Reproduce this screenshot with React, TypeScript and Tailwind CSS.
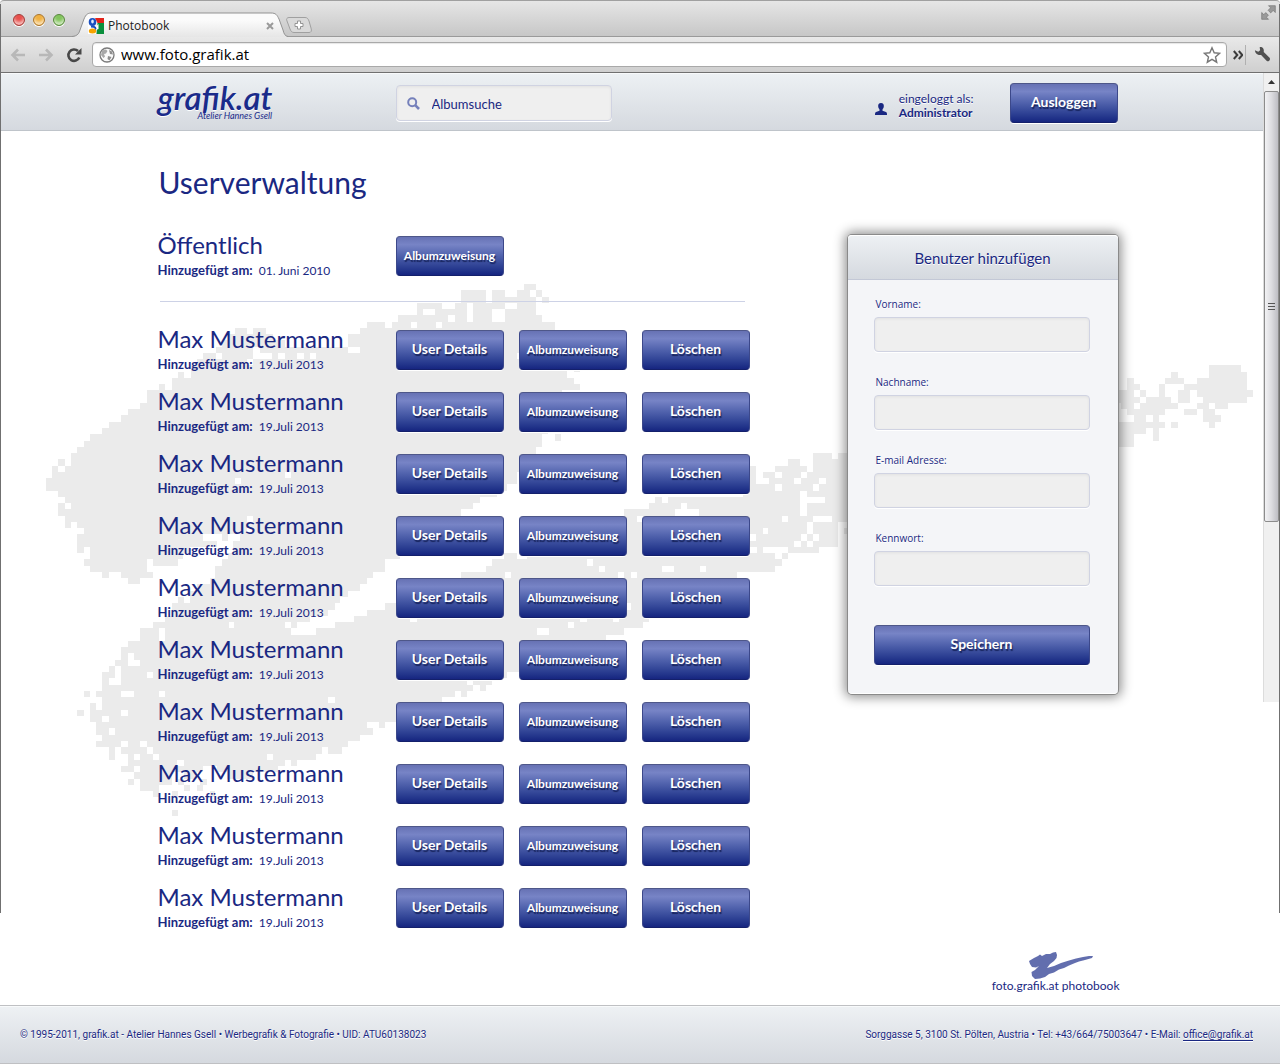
import type { ReactNode } from "react";

// Brush-stroke artwork: one entry per pixel row, [start, end] runs on a 3x grid.
const STROKE_ROWS: number[][][] = [
  [[1572, 1608]],
  [[1382, 1457], [1477, 1514], [1552, 1590], [1608, 1627]],
  [[1382, 1457], [1477, 1609], [1627, 1646]],
  [[1250, 1325], [1364, 1402], [1420, 1514], [1552, 1608]],
  [[1250, 1268], [1306, 1402], [1420, 1477], [1514, 1608]],
  [[1195, 1345], [1364, 1402], [1420, 1477], [1514, 1627]],
  [[1100, 1155], [1175, 1232], [1250, 1307], [1325, 1665]],
  [[704, 740], [760, 797], [1081, 1665]],
  [[685, 818], [1043, 1665]],
  [[667, 855], [1043, 1665]],
  [[648, 760], [780, 1044], [1081, 1665]],
  [[610, 648], [667, 760], [816, 835], [855, 890], [912, 930], [949, 1552], [1558, 1665]],
  [[590, 740], [760, 1665]],
  [[572, 1702], [1722, 1740], [3627, 3722]],
  [[534, 552], [572, 1702], [3514, 3533], [3627, 3740]],
  [[515, 1722], [3382, 3402], [3495, 3551], [3590, 3740]],
  [[477, 495], [515, 1740], [3382, 3420], [3477, 3495], [3551, 3740]],
  [[440, 1685], [3340, 3402], [3420, 3438], [3477, 3495], [3533, 3570], [3590, 3759]],
  [[440, 1685], [3340, 3420], [3438, 3514], [3533, 3570], [3608, 3740]],
  [[420, 1680], [3363, 3402], [3420, 3533], [3590, 3627], [3645, 3684]],
  [[383, 1670], [3382, 3495], [3553, 3590], [3608, 3645]],
  [[364, 1660], [3402, 3438], [3458, 3477], [3608, 3664]],
  [[326, 1650], [3340, 3495], [3514, 3533], [3627, 3645]],
  [[307, 1645], [3340, 3438], [3458, 3477]],
  [[270, 1627], [1665, 1684], [3340, 3402], [3458, 3477]],
  [[251, 1627], [3340, 3402]],
  [[232, 1609]],
  [[213, 1609], [2439, 2495], [2514, 2620]],
  [[175, 194], [213, 1590], [2363, 2400], [2439, 2620]],
  [[157, 175], [194, 1570], [2250, 2268], [2325, 2420], [2439, 2620]],
  [[157, 855], [872, 1552], [2250, 2268], [2288, 2325], [2345, 2402], [2420, 2620]],
  [[138, 704], [722, 1552], [2250, 2268], [2308, 2383], [2402, 2458], [2477, 2620]],
  [[138, 1520], [2250, 2325], [2345, 2439], [2458, 2620]],
  [[175, 1490], [2230, 2400], [2420, 2620]],
  [[194, 1440], [1965, 1985], [2003, 2400], [2475, 2620]],
  [[175, 194], [213, 1420], [1948, 2043], [2062, 2400], [2420, 2620]],
  [[175, 1382], [1872, 2025], [2098, 2400], [2420, 2620]],
  [[194, 740], [760, 1370], [1860, 1910], [1930, 2345], [2363, 2439], [2495, 2620]],
  [[194, 213], [232, 1350], [1850, 2420], [2439, 2514], [2552, 2620]],
  [[251, 740], [760, 1330], [1800, 2290], [2305, 2420], [2439, 2514], [2533, 2620]],
  [[232, 610], [667, 685], [720, 1300], [1740, 2250], [2268, 2402], [2420, 2439], [2458, 2514]],
  [[232, 650], [700, 1270], [1680, 2382], [2402, 2420], [2439, 2514]],
  [[232, 251], [270, 570], [700, 1240], [1600, 2250], [2270, 2290], [2363, 2457]],
  [[270, 550], [685, 1200], [1512, 1552], [1580, 2325], [2345, 2363]],
  [[251, 440], [458, 535], [667, 1156], [1477, 1761], [1780, 2345]],
  [[270, 440], [645, 1156], [1458, 1798], [1816, 1987], [2023, 2100], [2117, 2325]],
  [[307, 326], [364, 458], [645, 1118], [1382, 1515], [1534, 1855], [1873, 1892], [1911, 2212]],
  [[383, 420], [630, 1100], [1340, 2200]],
  [[590, 1081], [1290, 2170]],
  [[570, 1044], [1240, 2130]],
  [[534, 552], [570, 1020], [1200, 2080]],
  [[515, 1006], [1156, 1881], [1892, 2030]],
  [[515, 985], [1100, 1990]],
  [[495, 930], [1063, 1230], [1250, 1740], [1760, 1840], [1856, 1948]],
  [[458, 687], [702, 855], [872, 890], [1006, 1704], [1722, 1928]],
  [[420, 477], [495, 872], [949, 1610], [1647, 1872]],
  [[420, 477], [495, 1817]],
  [[383, 1780]],
  [[364, 1700]],
  [[364, 383], [402, 1640]],
  [[345, 383], [420, 1557]],
  [[326, 345], [364, 1557]],
  [[307, 345], [364, 440], [458, 1520]],
  [[307, 326], [364, 1402], [1420, 1475]],
  [[307, 1420], [1440, 1458]],
  [[251, 270], [288, 364], [402, 477], [495, 1364], [1383, 1401]],
  [[307, 985], [1005, 1325]],
  [[270, 288], [307, 1300]],
  [[232, 251], [270, 364], [383, 1270]],
  [[270, 307], [326, 1210]],
  [[288, 1100], [1137, 1156]],
  [[288, 326], [345, 1118]],
  [[307, 1081]],
  [[288, 364], [383, 420], [440, 1044]],
  [[326, 345], [364, 440], [458, 965], [985, 1025]],
  [[326, 345], [383, 402], [420, 458], [477, 800], [818, 949]],
  [[383, 530], [552, 855], [872, 890]],
  [[364, 402], [420, 610], [650, 835]],
  [[402, 515], [552, 590], [680, 760]],
  [[383, 402], [420, 515], [535, 552], [600, 620]],
  [[420, 477], [552, 570], [590, 610]],
  [[458, 477], [515, 535], [630, 645]],
  [],
  [],
  [[515, 534]],
];

const rowTop = (r: number) => Math.round(42 + r * 18.78);
const STROKE_PATH = STROKE_ROWS.map((runs, r) =>
  runs.map(([a, b]) => `M${a} ${rowTop(r)}H${b}V${rowTop(r + 1)}H${a}Z`).join(""),
).join("");

function BrushBackdrop() {
  return (
    <svg
      aria-hidden="true"
      className="pointer-events-none absolute left-0 top-[139px] h-[560px] w-[1260px]"
      viewBox="0 0 3780 1680"
      shapeRendering="crispEdges"
    >
      <path d={STROKE_PATH} fill="#ebebeb" />
    </svg>
  );
}

function NavyButton({ children, className = "" }: { children: ReactNode; className?: string }) {
  return (
    <button
      type="button"
      className={`h-10 cursor-pointer rounded border border-t-[#4e5789] border-x-[#3c488a] border-b-[#14206b] bg-linear-to-b from-[#6772b4] via-[#7784c6] via-20% to-[#162580] text-center font-bold text-white shadow-[0_1px_0_#fff] [text-shadow:1px_2px_1px_rgba(10,20,70,0.75)] ${className}`}
    >
      {children}
    </button>
  );
}

function TrafficLight({ className }: { className: string }) {
  return (
    <span className={`h-3 w-3 rounded-full border shadow-[0_1px_0_#fff,inset_0_-3px_3px_rgba(255,255,255,0.6)] ${className}`} />
  );
}

function BrowserChrome() {
  return (
    <div className="font-['Open_Sans',sans-serif]">
      <div className="relative flex h-[37px] items-start rounded-t border-t border-[#a0a0a0] bg-linear-to-b from-[#e6e6e6] to-[#c6c6c6] shadow-[inset_0_-1px_0_#9a9a9a]">
        <div className="flex gap-2 pl-[13px] pt-[13px]">
          <TrafficLight className="border-[#a0403c] bg-[#e8504c]" />
          <TrafficLight className="border-[#a87530] bg-[#f0b040]" />
          <TrafficLight className="border-[#59873f] bg-[#82c45c]" />
        </div>
        <div className="relative ml-[7px] h-9 w-[216px]">
          <svg aria-hidden="true" className="absolute inset-0 h-9 w-[216px]" viewBox="0 0 216 36">
            <defs>
              <linearGradient id="tab" x1="0" x2="0" y1="0" y2="1">
                <stop offset="0.3" stopColor="#fbfbfb" />
                <stop offset="1" stopColor="#e6e6e6" />
              </linearGradient>
            </defs>
            <path d="M0 36C6 35 7 32 8 29L12 18C14 13 16 12 20 12H199C204 12 205 14 207 18L211 29C212 33 213 35 216 36Z" fill="url(#tab)" />
            <path d="M0 35.500C6 35 7 32 8 29L12 18C14 13 16 12 20 12H199C204 12 205 14 207 18L211 29C212 33 213 35 216 35.500" fill="none" stroke="#939393" />
          </svg>
          <div className="relative flex items-center pl-4 pt-4">
            <svg aria-hidden="true" className="h-4 w-4" viewBox="0 0 16 16">
              <path d="M0 0h8v16H0z" fill="#fff" />
              <path d="M7 0h9v5H9.500z" fill="#e2231a" />
              <path d="M9.500 5H16v11H8.500z" fill="#0a8f3c" />
              <path d="M8 8.500 10.500 6v5l-2.500 1z" fill="#fff" />
              <ellipse cx="4.500" cy="4" rx="3.800" ry="4" fill="#1a4fbf" />
              <ellipse cx="4.500" cy="3.600" rx="1.300" ry="2" fill="#e4ecfa" />
              <path d="M3 8.500c5 0 5 2 4 3" fill="none" stroke="#1a4fbf" strokeWidth="1.800" />
              <ellipse cx="4.500" cy="13" rx="3.700" ry="2.500" fill="#f5a300" />
            </svg>
            <span className="ml-1 text-[12px] leading-[18px] text-[#222]">Photobook</span>
            <button type="button" aria-label="Tab schließen" className="ml-auto mr-[14px] h-2 w-2">
              <svg viewBox="0 0 8 8" className="h-2 w-2" stroke="#9a9a9a" strokeWidth="2">
                <path d="M1 1l6 6M7 1L1 7" />
              </svg>
            </button>
          </div>
        </div>
        <button type="button" aria-label="Neuer Tab" className="-ml-0.5 mt-4 h-4 w-[26px]">
          <svg viewBox="0 0 26 16" className="h-4 w-[26px]">
            <path d="M3 .5H19C21 .5 22 1.500 23 4L25 11C26 14 25 15.500 23 15.500H8C6 15.500 5 14.500 4 12L1 4C0 2 1 .5 3 .5Z" fill="#d9d9d9" stroke="#a0a0a0" />
            <path d="M11.500 4h3v2.500H17v3h-2.500V12h-3V9.500H9v-3h2.500Z" fill="#fff" stroke="#949494" />
          </svg>
        </button>
        <svg aria-hidden="true" className="ml-auto mr-1 mt-1 h-[15px] w-[15px]" viewBox="0 0 15 15" fill="#9a9a9a" stroke="#777" strokeWidth=".7">
          <path d="M7.500 .7H14.300V7.500L12.200 5.400 9.700 7.900 7.100 5.300 9.600 2.800Z" />
          <path d="M7.500 14.300H.7V7.500L2.800 9.600 4.800 7.600 7.400 10.200 5.400 12.200Z" />
        </svg>
      </div>
      <div className="flex h-9 items-center border-b border-[#707070] bg-linear-to-b from-[#e9e9e9] to-[#cfcfcf] px-[10px]">
        <button type="button" aria-label="Zurück" className="h-4 w-4">
          <svg viewBox="0 0 16 16" className="h-4 w-4" fill="none" stroke="#b8b8b8" strokeWidth="2.600"><path d="M15 8H3M8 2.500 2.500 8 8 13.500" /></svg>
        </button>
        <button type="button" aria-label="Vorwärts" className="ml-3 h-4 w-4">
          <svg viewBox="0 0 16 16" className="h-4 w-4" fill="none" stroke="#b8b8b8" strokeWidth="2.600"><path d="M1 8h12M8 2.500 13.500 8 8 13.500" /></svg>
        </button>
        <button type="button" aria-label="Neu laden" className="ml-3 h-4 w-4">
          <svg viewBox="0 0 16 16" className="h-4 w-4">
            <path d="M13.300 10.500A5.700 5.700 0 1 1 12 4" fill="none" stroke="#484848" strokeWidth="2.600" />
            <path d="M15.500 1v6.500H9Z" fill="#484848" />
          </svg>
        </button>
        <div className="ml-[10px] flex h-[25px] grow items-center rounded border border-[#a9a9a9] bg-white pl-[6px] pr-[5px] shadow-[inset_0_1px_1px_rgba(0,0,0,0.1)]">
          <svg aria-hidden="true" viewBox="0 0 16 16" className="h-4 w-4 shrink-0">
            <circle cx="8" cy="8" r="7" fill="#fafafa" stroke="#7a7a7a" strokeWidth="1.300" />
            <path d="M3 3.500 7 2.500 8.500 4 7 6.500 5 7 6 9.500 4.500 11 2 8Z" fill="#a8a8a8" />
            <path d="M10 3 13 4.500 14 7.500 11 7ZM9 9 12.500 10 10.500 13.500 8.500 12Z" fill="#8f8f8f" />
          </svg>
          <input
            aria-label="Adresse"
            defaultValue="www.foto.grafik.at"
            className="ml-[6px] h-[22px] w-0 grow bg-transparent pb-0.5 text-[15px] leading-5 text-black outline-none"
          />
          <svg aria-hidden="true" viewBox="0 0 18 18" className="h-[18px] w-[18px] shrink-0">
            <path d="M9 1.800 11.200 6.800 16.600 7.300 12.500 10.900 13.700 16.200 9 13.400 4.300 16.200 5.500 10.900 1.400 7.300 6.800 6.800Z" fill="#fff" stroke="#777" strokeWidth="1.400" />
          </svg>
        </div>
        <svg aria-hidden="true" viewBox="0 0 10 10" className="ml-[6px] h-[10px] w-[10px]" fill="none" stroke="#3c3c3c" strokeWidth="2">
          <path d="M.8 1 4.300 5 .8 9M5.800 1 9.300 5 5.800 9" />
        </svg>
        <span className="ml-[2px] h-5 w-px bg-[#b0b0b0]" />
        <svg aria-hidden="true" viewBox="0 0 18 18" className="ml-2 -mr-px h-[17px] w-[17px]">
          <path d="M1 4.500 4.500 6 6.500 4.500 6 1.200C9 .5 11 3 10.300 6.300L16.500 12.500C18 14.500 15.500 17.500 13.300 15.600L7.500 9.500C4.500 10.300 1 8 1 4.500Z" fill="#505050" />
        </svg>
      </div>
    </div>
  );
}

function SiteHeader() {
  return (
    <header className="border-b border-[#bfc4ca] bg-linear-to-b from-[#edf1f4] to-[#d5d9df] pl-3 pr-[17px] shadow-[inset_0_1px_0_#f8fafb]">
      <div className="mx-auto flex h-[57px] w-full max-w-[960px] items-start">
        <a href="#" className="relative block h-[57px] w-[238px] shrink-0 italic text-[#1a2b8a]">
          <span className="block pt-1 text-[33px] font-semibold leading-[40px] [text-shadow:0_1px_0_#fff]">grafik.at</span>
          <span className="absolute left-10 top-[37px] text-[9px] leading-[12px]">Atelier Hannes Gsell</span>
        </a>
        <label className="mt-3 flex h-9 w-[216px] items-center rounded border border-[#d0d3e2] bg-[#efefef] pl-[10px] shadow-[0_1px_0_#fff,inset_0_1px_3px_rgba(0,0,0,0.06)]">
          <svg aria-hidden="true" viewBox="0 0 13 13" className="h-[13px] w-[13px]" fill="none" stroke="#7580bb">
            <circle cx="5.200" cy="5.200" r="4" strokeWidth="2" />
            <path d="M8.200 8.200 12 12" strokeWidth="2.600" />
          </svg>
          <input
            type="search"
            aria-label="Albumsuche"
            placeholder="Albumsuche"
            className="ml-[12px] h-8 w-0 grow bg-transparent pt-0.5 text-[13px] leading-5 outline-none placeholder:text-[#1a2882]"
          />
        </label>
        <div className="ml-auto flex items-end gap-3 pt-[19px]">
          <svg aria-hidden="true" viewBox="0 0 12 12" className="mb-[5px] h-3 w-3" fill="#1a2882">
            <path d="M6 0C8.200 0 9 1.500 8.800 3.500 8.700 5 8 5.700 7.500 6.400V7.800L11 9C12 9.500 12 10.500 12 12H0C0 10.500 0 9.500 1 9L4.500 7.800V6.400C4 5.700 3.300 5 3.200 3.500 3 1.500 3.800 0 6 0Z" />
          </svg>
          <p className="text-[12px] leading-[14px] [text-shadow:0_1px_0_#fff]">
            eingeloggt als:
            <br />
            <strong>Administrator</strong>
          </p>
        </div>
        <NavyButton className="ml-9 mt-[10px] w-[108px] pb-1 text-[14px]">Ausloggen</NavyButton>
      </div>
    </header>
  );
}

function AccountRow({ name, date, full = false }: { name: string; date: string; full?: boolean }) {
  return (
    <li className="flex h-10 items-start">
      <div className="w-[238px] shrink-0">
        <h2 className="text-[24px] leading-[18px]">{name}</h2>
        <p className="mt-2 text-[12px] leading-4">
          <strong className="mr-[3px] text-[13px]">Hinzugefügt am:</strong> {date}
        </p>
      </div>
      <div className="flex gap-[15px]">
        {full && <NavyButton className="w-[108px] pb-1 text-[14px]">User Details</NavyButton>}
        <NavyButton className="w-[108px] text-[12px]">Albumzuweisung</NavyButton>
        {full && <NavyButton className="w-[108px] pb-1 text-[14px]">Löschen</NavyButton>}
      </div>
    </li>
  );
}

const FIELDS = [
  { id: "vorname", label: "Vorname:", type: "text" },
  { id: "nachname", label: "Nachname:", type: "text" },
  { id: "email", label: "E-mail Adresse:", type: "email" },
  { id: "kennwort", label: "Kennwort:", type: "password" },
];

function UserForm() {
  return (
    <form className="w-[270px] shrink-0 rounded border-b border-white bg-[#f4f5f8] shadow-[0_0_0_1px_#8a8a8a,0_0_12px_3px_rgba(0,0,0,0.45)]">
      <h2 className="h-[45px] rounded-t border-b border-[#c3c8d6] bg-linear-to-b from-[#eef1f4] to-[#d5d9df] text-center text-[15px] leading-[46px] shadow-[inset_0_1px_0_#fff] [text-shadow:0_1px_0_#fff]">
        Benutzer hinzufügen
      </h2>
      <div className="flex flex-col pb-7 pl-[26px] pr-7 pt-4">
        <div className="flex flex-col gap-[22px]">
          {FIELDS.map((f) => (
            <div key={f.id}>
              <label htmlFor={f.id} className="ml-0.5 block font-['Open_Sans',sans-serif] text-[10px] leading-4 [text-shadow:0_1px_0_#fff]">
                {f.label}
              </label>
              <input
                id={f.id}
                type={f.type}
                className="mt-[5px] block h-[35px] w-full rounded border border-[#d0d3e2] bg-[#efefef] px-2 text-sm shadow-[0_1px_0_#fff,inset_0_1px_3px_rgba(0,0,0,0.06)]"
              />
            </div>
          ))}
        </div>
        <NavyButton className="mt-[39px] w-full pb-1 text-[14px]">Speichern</NavyButton>
      </div>
    </form>
  );
}

function Scrollbar() {
  return (
    <div aria-hidden="true" className="flex h-[629px] w-4 shrink-0 flex-col border-l border-[#dcdcdc] bg-[#f0f0f0]">
      <svg viewBox="0 0 15 18" className="h-[18px] w-[15px]">
        <path d="M4 11 7.500 7 11 11Z" fill="#333" />
      </svg>
      <div className="flex h-[431px] flex-col items-center justify-center gap-0.5 rounded-xs border border-[#8c8c8c] bg-linear-to-r from-[#f2f2f4] via-[#dcdce0] to-[#bdbdc3]">
        <span className="h-px w-[7px] bg-[#555]" />
        <span className="h-px w-[7px] bg-[#555]" />
        <span className="h-px w-[7px] bg-[#555]" />
      </div>
    </div>
  );
}

const USERS = Array.from({ length: 10 }, (_, i) => ({ id: i, name: "Max Mustermann", date: "19.Juli 2013" }));

export default function App() {
  return (
    <div className="relative bg-white font-['Lato',sans-serif] text-[#1a2882]">
      <BrowserChrome />
      <div className="relative">
        <SiteHeader />
        <div className="absolute right-px top-0 z-10">
          <Scrollbar />
        </div>
        <main className="relative pb-3 pl-3 pr-[17px]">
          <BrushBackdrop />
          <div className="relative mx-auto w-full max-w-[960px]">
            <h1 className="ml-px pt-[31px] text-[30px] leading-10">Userverwaltung</h1>
            <div className="mt-[33px] flex items-start justify-between">
              <div className="w-[592px] pt-px">
                <ul>
                  <AccountRow name="Öffentlich" date="01. Juni 2010" />
                </ul>
                <hr className="mb-7 ml-0.5 mr-[5px] mt-[25px] border-[#cdd2e6]" />
                <ul className="flex flex-col gap-[22px]">
                  {USERS.map((u) => (
                    <AccountRow key={u.id} name={u.name} date={u.date} full />
                  ))}
                </ul>
              </div>
              <UserForm />
            </div>
            <div className="mt-6 flex flex-col items-end">
              <svg aria-hidden="true" viewBox="0 0 64 27" className="mr-[25px] h-[27px] w-16" fill="#626eae">
                <path d="M0 9 5 6 9 4 11 2.500 13 4 17 2 21 2 24 .5 27 0 28 3 27.500 6 25 9 21 12 18 16 25 14 32 11 40 8.500 47 6.500 54 5 60 4 64 4 63 6 56 8 50 9.500 46 11 40 13.500 35 16 30 17.500 25 20.500 20 22 16 25 11 26.500 6 27 3 24 2.500 20 6 18 10 14 7 15.500 3 15 1 12Z" />
              </svg>
              <p className="-mr-0.5 text-[12px] leading-[14px]">foto.grafik.at photobook</p>
            </div>
          </div>
        </main>
      </div>
      <footer className="flex h-[59px] items-center justify-between border-y border-[#bfc0c3] bg-linear-to-b from-[#eef1f4] to-[#d5d9df] pl-5 pr-[27px] font-['Roboto',sans-serif] text-[10px] shadow-[inset_0_1px_0_#f8fafb] [text-shadow:0_1px_0_#fff]">
        <p>© 1995-2011, grafik.at - Atelier Hannes Gsell • Werbegrafik &amp; Fotografie • UID: ATU60138023</p>
        <p>
          Sorggasse 5, 3100 St. Pölten, Austria • Tel: +43/664/75003647 • E-Mail:{" "}
          <a href="mailto:office@grafik.at" className="underline underline-offset-2">
            office@grafik.at
          </a>
        </p>
      </footer>
      <span aria-hidden="true" className="absolute left-0 top-1 h-[909px] w-px bg-[#707070]" />
      <span aria-hidden="true" className="absolute right-0 top-1 h-[909px] w-px bg-[#707070]" />
    </div>
  );
}
